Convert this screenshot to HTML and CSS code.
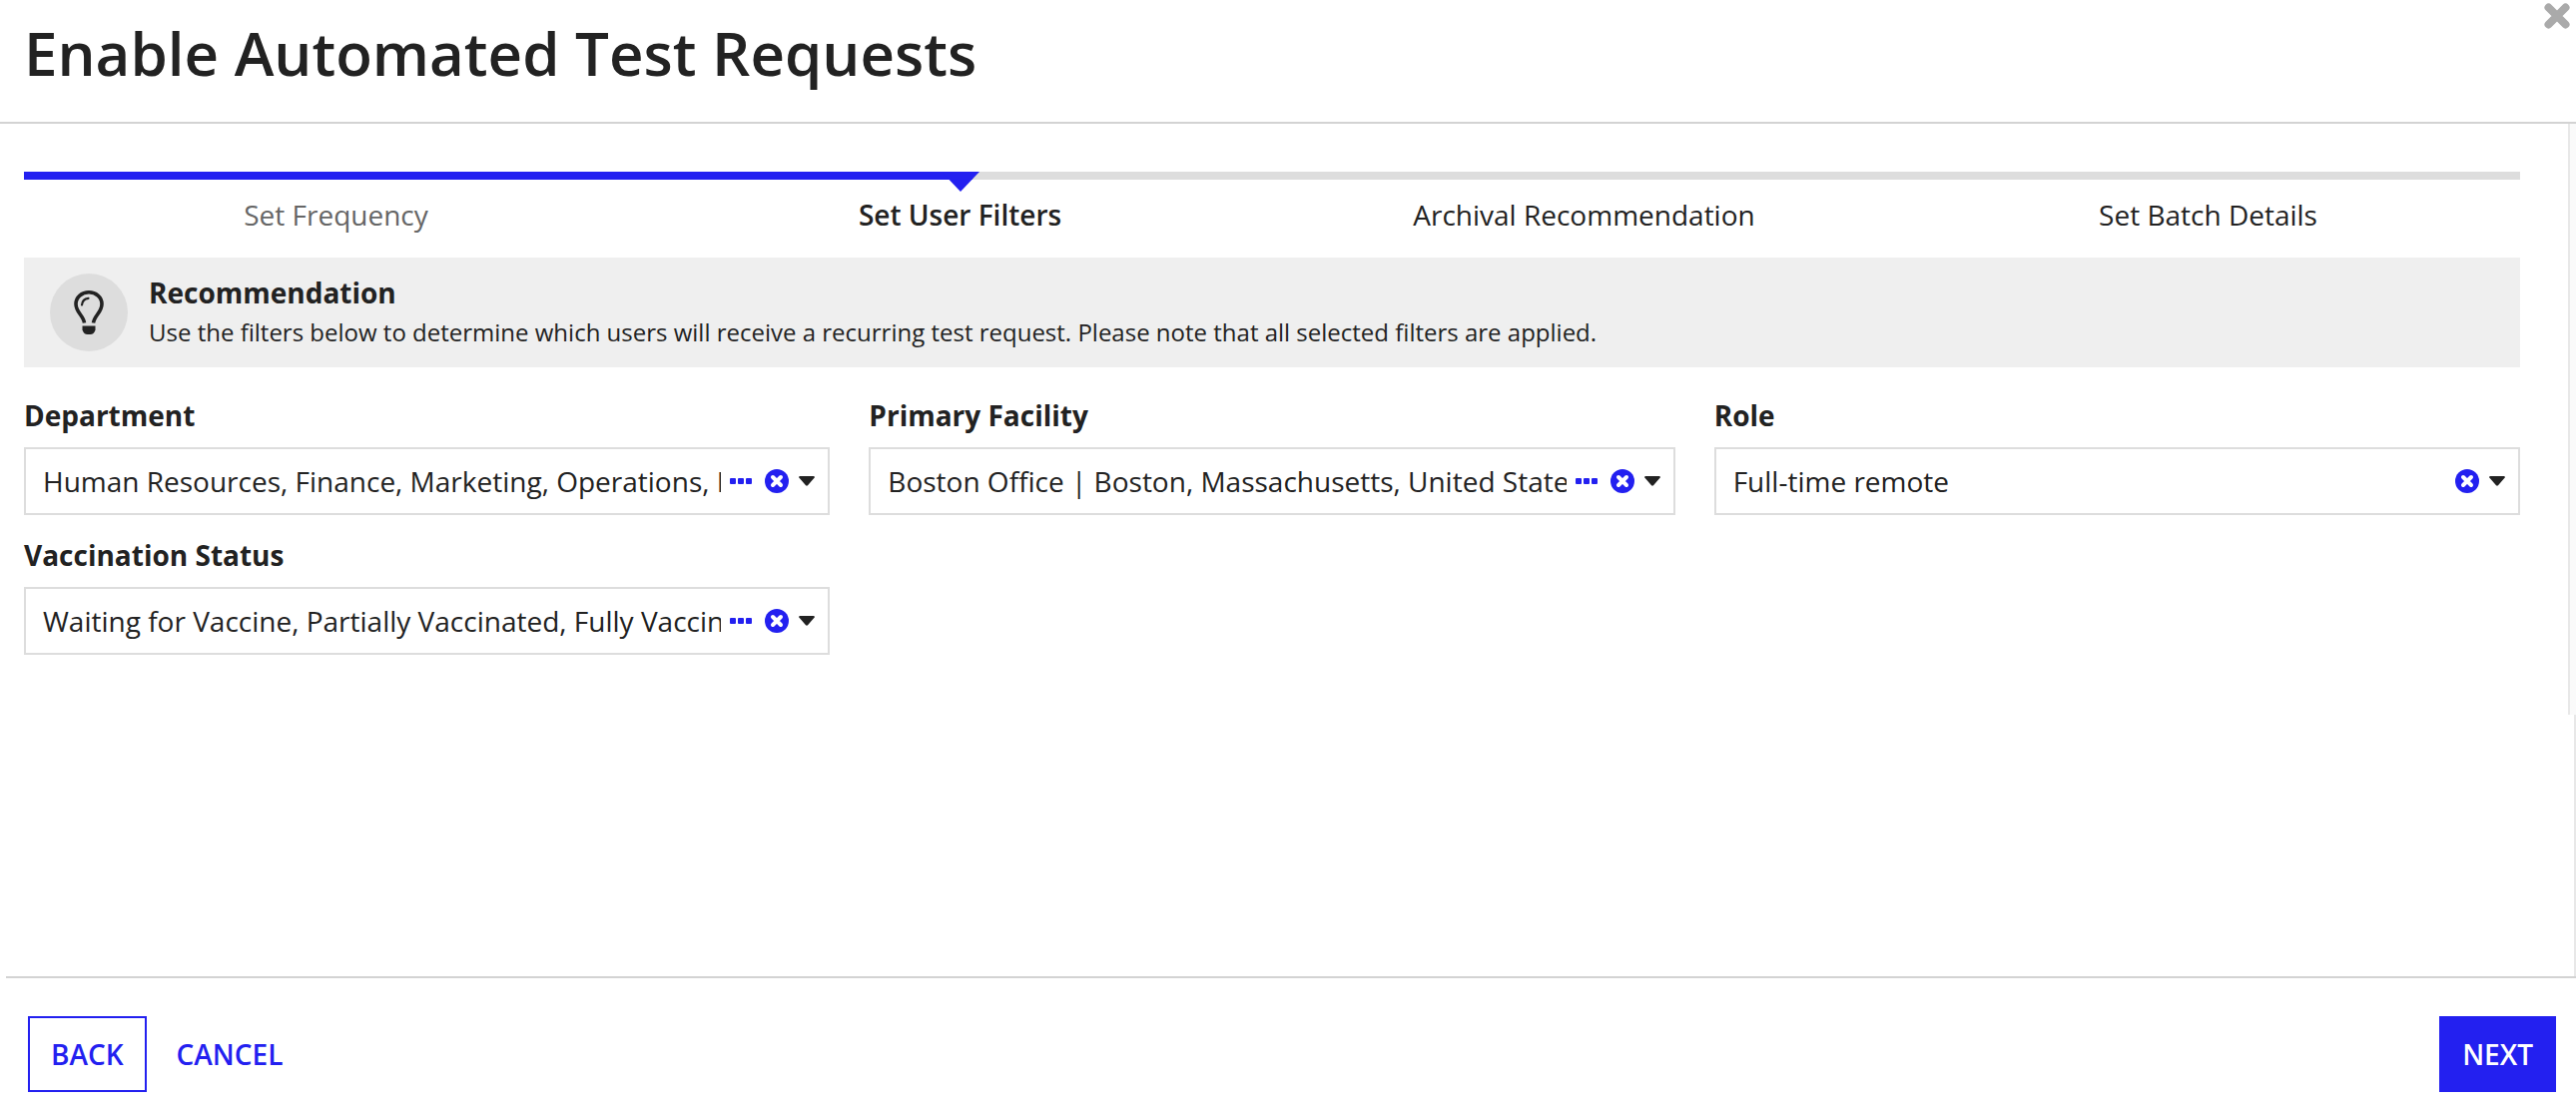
FILE: index.html
```html
<!DOCTYPE html>
<html lang="en">
<head>
<meta charset="utf-8">
<title>Enable Automated Test Requests</title>
<link rel="stylesheet" href="styles.css">
</head>
<body>
<svg class="sprite" aria-hidden="true">
  <symbol id="dots" viewBox="0 0 22 6"><rect width="6" height="6" rx="1"/><rect x="8" width="6" height="6" rx="1"/><rect x="16" width="6" height="6" rx="1"/></symbol>
  <symbol id="clear" viewBox="0 0 24 24"><circle cx="12" cy="12" r="12"/><path d="M8 8l8 8M16 8l-8 8" stroke="#fff" stroke-width="4" stroke-linecap="round"/></symbol>
  <symbol id="caret" viewBox="0 0 16 10"><path d="M1 0h14q1.600 .6.500 1.800L9 9.300q-1 .9-2 0L.5 1.800Q-.6.600 1 0z"/></symbol>
</svg>
<main class="dialog">
  <header class="dialog-header">
    <h1 class="title">Enable Automated Test Requests</h1>
    <button class="close" type="button" aria-label="Close"><svg viewBox="0 0 28 28"><path d="M5.500 5.500l17 17M22.500 5.500l-17 17" stroke="currentColor" stroke-width="8" stroke-linecap="round"/></svg></button>
  </header>
  <div class="dialog-body">
    <div class="content">
      <div class="progress"><div class="progress-fill"></div></div>
      <ol class="steps">
        <li class="step done">Set Frequency</li>
        <li class="step current" aria-current="step">Set User Filters</li>
        <li class="step">Archival Recommendation</li>
        <li class="step">Set Batch Details</li>
      </ol>
      <section class="banner">
        <div class="badge"><svg viewBox="0 0 32 44"><path d="M11.500 32.500C10.500 25 3 22 3 13.500 3 6.500 9 1.800 16 1.800S29 6.500 29 13.500C29 22 21.500 25 20.500 32.500" fill="none" stroke="currentColor" stroke-width="3.600"/><path d="M9 14.500Q9.500 8.500 15.500 7.800" fill="none" stroke="currentColor" stroke-width="2.200" stroke-linecap="round"/><path d="M9.500 35.500h13v4q-1.500 4.500-5 4.500h-3q-3.500 0-5-4.500z" fill="currentColor"/></svg></div>
        <div class="banner-text">
          <h2 class="banner-title">Recommendation</h2>
          <p class="banner-copy">Use the filters below to determine which users will receive a recurring test request. Please note that all selected filters are applied.</p>
        </div>
      </section>
      <form class="filters">
        <div class="field">
          <label class="label" for="department">Department</label>
          <div class="control">
            <input class="value" id="department" type="text" readonly value="Human Resources, Finance, Marketing, Operations, Legal">
            <button class="icon more" type="button" aria-label="Show all departments"><svg class="dots"><use href="#dots"/></svg></button>
            <button class="icon" type="button" aria-label="Clear departments"><svg class="clear"><use href="#clear"/></svg></button>
            <button class="icon arrow" type="button" aria-label="Open departments"><svg class="caret"><use href="#caret"/></svg></button>
          </div>
        </div>
        <div class="field">
          <label class="label" for="facility">Primary Facility</label>
          <div class="control">
            <input class="value" id="facility" type="text" readonly value="Boston Office | Boston, Massachusetts, United States">
            <button class="icon more" type="button" aria-label="Show all facilities"><svg class="dots"><use href="#dots"/></svg></button>
            <button class="icon" type="button" aria-label="Clear facilities"><svg class="clear"><use href="#clear"/></svg></button>
            <button class="icon arrow" type="button" aria-label="Open facilities"><svg class="caret"><use href="#caret"/></svg></button>
          </div>
        </div>
        <div class="field">
          <label class="label" for="role">Role</label>
          <div class="control">
            <input class="value" id="role" type="text" readonly value="Full-time remote">
            <button class="icon" type="button" aria-label="Clear roles"><svg class="clear"><use href="#clear"/></svg></button>
            <button class="icon arrow" type="button" aria-label="Open roles"><svg class="caret"><use href="#caret"/></svg></button>
          </div>
        </div>
        <div class="field">
          <label class="label" for="vaccination">Vaccination Status</label>
          <div class="control">
            <input class="value" id="vaccination" type="text" readonly value="Waiting for Vaccine, Partially Vaccinated, Fully Vaccinated">
            <button class="icon more" type="button" aria-label="Show all statuses"><svg class="dots"><use href="#dots"/></svg></button>
            <button class="icon" type="button" aria-label="Clear statuses"><svg class="clear"><use href="#clear"/></svg></button>
            <button class="icon arrow" type="button" aria-label="Open statuses"><svg class="caret"><use href="#caret"/></svg></button>
          </div>
        </div>
      </form>
    </div>
    <div class="rail"><div class="rail-track"></div><div class="rail-edge"></div></div>
  </div>
  <footer class="dialog-footer">
    <button class="btn outline" type="button">BACK</button>
    <button class="btn text" type="button">CANCEL</button>
    <button class="btn primary" type="button">NEXT</button>
  </footer>
</main>
</body>
</html>
```

FILE: styles.css
```css
* { box-sizing: border-box; }
body {
  margin: 0;
  background: #fff;
  color: #222;
  font-family: "Open Sans", "Noto Sans", sans-serif;
  font-size: 28px;
  line-height: 40px;
}
button, input { font: inherit; color: inherit; border: 0; padding: 0; background: none; }
button { cursor: pointer; }
h1, h2, p, ol { margin: 0; padding: 0; }
.sprite { position: absolute; width: 0; height: 0; }

.dialog { display: flex; flex-direction: column; min-height: 100vh; }
.dialog-header {
  display: flex;
  justify-content: space-between;
  align-items: flex-start;
  padding: 2px 5px 0 24px;
  height: 124px;
  border-bottom: 2px solid #d3d3d3;
}
.title { padding-top: 10px; font-size: 60px; line-height: 82px; font-weight: 600; }
.close { display: flex; color: #aaa; }
.close svg { width: 28px; height: 28px; }

.dialog-body { flex: 1; display: flex; }
.content { flex: 1; min-width: 0; padding: 48px 48px 40px 24px; }
.progress { height: 8px; background: #ddd; }
.progress-fill { position: relative; width: 38%; height: 8px; background: #2320f0; }
.progress-fill::after {
  content: "";
  position: absolute;
  top: 0;
  right: -7px;
  width: 38px;
  height: 20px;
  background: #2320f0;
  clip-path: polygon(0 0, 100% 0, 50% 100%);
}
.steps { display: grid; grid-template-columns: repeat(4, 1fr); margin: 15px 0 23px; list-style: none; text-align: center; }
.done { color: #666; }
.current { font-weight: 600; }

.banner { display: flex; align-items: center; gap: 21px; height: 110px; padding: 0 26px; background: #efefef; }
.badge {
  flex: none;
  display: flex;
  align-items: center;
  justify-content: center;
  width: 78px;
  height: 78px;
  border-radius: 50%;
  background: #ddd;
}
.badge svg { width: 32px; height: 44px; }
.banner-title { font-size: 28px; line-height: 40px; font-weight: 700; }
.banner-copy { font-size: 24px; line-height: 40px; }

.filters { display: grid; grid-template-columns: repeat(3, minmax(0, 1fr)); gap: 20px 39px; padding-top: 28px; }
.field { display: flex; flex-direction: column; gap: 12px; }
.label { font-weight: 700; }
.control { display: flex; align-items: center; height: 68px; padding: 0 13px 0 17px; border: 2px solid #ddd; }
.value { flex: 1; min-width: 0; height: 40px; outline: 0; margin-right: 9px; }
.icon { display: flex; color: #2320f0; margin-right: 10px; }
.icon.more { margin-right: 13px; }
.icon svg { fill: currentColor; }
.icon.arrow { color: #222; margin: 0; }
.dots { width: 22px; height: 6px; }
.clear { width: 24px; height: 24px; }
.caret { width: 16px; height: 10px; }

.rail { display: flex; flex-direction: column; align-items: flex-end; width: 8px; }
.rail-track { flex: 592; width: 8px; border-left: 2px solid #e8e8e8; background: #fafafa; }
.rail-edge { flex: 262; width: 2px; background: #e8e8e8; }

.dialog-footer {
  display: flex;
  align-items: flex-start;
  gap: 30px;
  height: 132px;
  margin-left: 6px;
  padding: 38px 20px 0 22px;
  border-top: 2px solid #d3d3d3;
}
.btn { height: 76px; font-weight: 600; color: #2320f0; }
.outline { padding: 0 21px; border: 2px solid #2320f0; }
.primary { margin-left: auto; padding: 0 23px; background: #2320f0; color: #fff; }
```
